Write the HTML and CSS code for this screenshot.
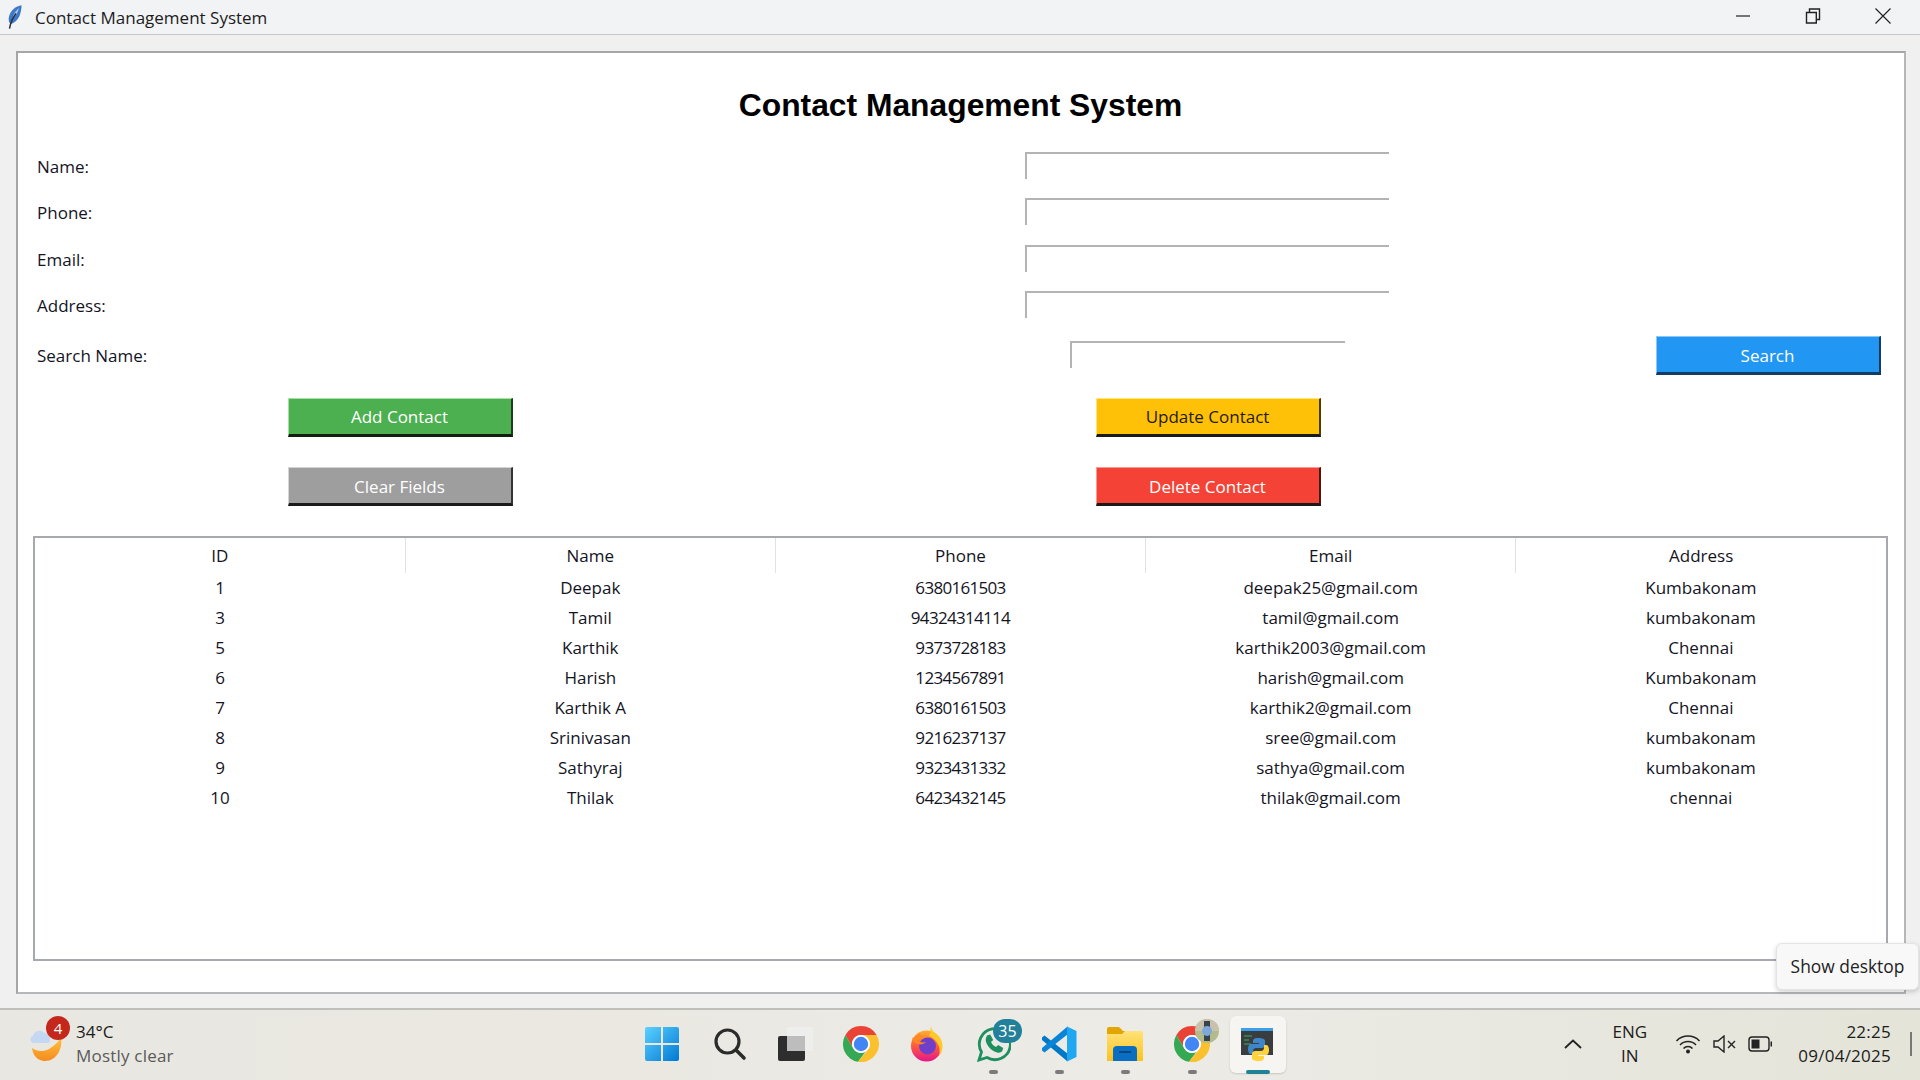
FILE: index.html
```html
<!DOCTYPE html>
<html lang="en">
<head>
<meta charset="utf-8">
<title>Contact Management System</title>
<link rel="stylesheet" href="styles.css">
</head>
<body>
<svg class="defs" width="0" height="0" aria-hidden="true">
  <defs>
    <symbol id="chrome" viewBox="0 0 36 36">
      <path fill="#ea4335" d="M18 0A18 18 0 0 1 33.6 9H18A9 9 0 0 0 10.2 22.5L2.4 9A18 18 0 0 1 18 0Z"/>
      <path fill="#34a853" d="M2.4 9L10.2 22.5A9 9 0 0 0 22.5 25.8L15 35.8A18 18 0 0 1 2.4 9Z"/>
      <path fill="#fbc02d" d="M33.6 9A18 18 0 0 1 15 35.8L25.8 22.5A9 9 0 0 0 18 9Z"/>
      <circle cx="18" cy="18" r="9" fill="#fff"/>
      <circle cx="18" cy="18" r="7.2" fill="#4285f4"/>
    </symbol>
    <linearGradient id="ffbody" x1="0" y1="0" x2="0" y2="1">
      <stop offset="0" stop-color="#ffb02e"/><stop offset=".5" stop-color="#ff5a3c"/><stop offset="1" stop-color="#e3168c"/>
    </linearGradient>
    <linearGradient id="winlogo" x1="0" y1="0" x2="1" y2="1">
      <stop offset="0" stop-color="#5cd1ff"/><stop offset="1" stop-color="#0078d4"/>
    </linearGradient>
    <linearGradient id="moon" x1="0" y1="0" x2="0" y2="1">
      <stop offset="0" stop-color="#ffc53d"/><stop offset="1" stop-color="#f58a1f"/>
    </linearGradient>
    <linearGradient id="folder" x1="0" y1="0" x2="0" y2="1">
      <stop offset="0" stop-color="#ffe27a"/><stop offset="1" stop-color="#fcc21b"/>
    </linearGradient>
  </defs>
</svg>

<header class="titlebar">
  <svg class="feather" viewBox="0 0 14 24">
    <path fill="#3f78c9" d="M13.5 .3C8 .8 2 5.5 .8 12.5 .4 15.5 1 17.5 2.5 19 7 18 10.500 14 12 9.500 13 6 13.700 3 13.500 .3Z"/>
    <path fill="#a6c9f0" d="M11 3C8 5.500 5 9.500 4 14.500 7 12 9.800 8 11 3Z"/>
    <path stroke="#26303f" stroke-width="1.500" fill="none" d="M8 8.500C5 12.500 2.500 17 1.500 23.700"/>
  </svg>
  <span class="titlebar-text">Contact Management System</span>
  <div class="controls">
    <svg class="ctl" viewBox="0 0 16 16"><path d="M1 8H15" stroke="#222" stroke-width="1.2"/></svg>
    <svg class="ctl" viewBox="0 0 16 16"><path d="M1.500 4.500h9.800v10.500H1.500zM4.500 4.500V1h10v10.500h-3" fill="none" stroke="#222" stroke-width="1.400"/></svg>
    <svg class="ctl" viewBox="0 0 16 16"><path d="M.5 .5L15.500 15.500M15.500 .5L.5 15.500" stroke="#222" stroke-width="1.200"/></svg>
  </div>
</header>

<main class="window">
  <section class="panel">
    <h1 class="heading">Contact Management System</h1>
    <div class="form">
      <label class="label">Name:</label><div class="cell"><div class="entry"></div></div><div></div>
      <label class="label">Phone:</label><div class="cell"><div class="entry"></div></div><div></div>
      <label class="label">Email:</label><div class="cell"><div class="entry"></div></div><div></div>
      <label class="label">Address:</label><div class="cell"><div class="entry"></div></div><div></div>
      <label class="label search-row">Search Name:</label>
      <div class="cell search-row"><div class="entry entry-short"></div></div>
      <div class="cell search-row"><div class="btn btn-blue">Search</div></div>
      <div class="cell btn-row"><div class="btn btn-green">Add Contact</div></div>
      <div class="cell btn-row"><div class="btn btn-amber">Update Contact</div></div>
      <div></div>
      <div class="cell btn-row"><div class="btn btn-gray">Clear Fields</div></div>
      <div class="cell btn-row"><div class="btn btn-red">Delete Contact</div></div>
      <div></div>
    </div>
    <div class="table-box">
      <table class="contacts">
        <thead>
          <tr><th>ID</th><th>Name</th><th>Phone</th><th>Email</th><th>Address</th></tr>
        </thead>
        <tbody>
          <tr><td>1</td><td>Deepak</td><td>6380161503</td><td>deepak25@gmail.com</td><td>Kumbakonam</td></tr>
          <tr><td>3</td><td>Tamil</td><td>94324314114</td><td>tamil@gmail.com</td><td>kumbakonam</td></tr>
          <tr><td>5</td><td>Karthik</td><td>9373728183</td><td>karthik2003@gmail.com</td><td>Chennai</td></tr>
          <tr><td>6</td><td>Harish</td><td>1234567891</td><td>harish@gmail.com</td><td>Kumbakonam</td></tr>
          <tr><td>7</td><td>Karthik A</td><td>6380161503</td><td>karthik2@gmail.com</td><td>Chennai</td></tr>
          <tr><td>8</td><td>Srinivasan</td><td>9216237137</td><td>sree@gmail.com</td><td>kumbakonam</td></tr>
          <tr><td>9</td><td>Sathyraj</td><td>9323431332</td><td>sathya@gmail.com</td><td>kumbakonam</td></tr>
          <tr><td>10</td><td>Thilak</td><td>6423432145</td><td>thilak@gmail.com</td><td>chennai</td></tr>
        </tbody>
      </table>
    </div>
  </section>
</main>

<div class="tooltip">Show desktop</div>

<footer class="taskbar">
  <div class="weather">
    <div class="weather-icon">
      <svg viewBox="0 0 36 34" width="36" height="34">
        <path fill="url(#moon)" d="M33 9C35 20 29 33 17 33 10 33 5 28 4 20 10 24 18 24 24 19 28 16 31 13 33 9Z"/>
        <path fill="#c4d8f4" d="M6 15C2 15 1 9 5 8 6 3 13 1 16 5 20 5 23 8 22 12 22 14 21 15 19 15Z"/>
      </svg>
      <span class="weather-badge">4</span>
    </div>
    <div class="weather-text">
      <div class="temp">34°C</div>
      <div class="cond">Mostly clear</div>
    </div>
  </div>

  <div class="apps">
    <div class="app">
      <svg width="36" height="36" viewBox="0 0 36 36">
        <path fill="url(#winlogo)" d="M1 3a2 2 0 0 1 2-2h14v16H1zM19 1h14a2 2 0 0 1 2 2v14H19zM1 19h16v16H3a2 2 0 0 1-2-2zM19 19h16v14a2 2 0 0 1-2 2H19z"/>
      </svg>
    </div>
    <div class="app">
      <svg class="icon-search" width="34" height="34" viewBox="0 0 34 34">
        <circle cx="14.5" cy="14.5" r="11.5" fill="none" stroke="#2b2b2b" stroke-width="3.2"/>
        <path d="M23 23L31 31" stroke="#2b2b2b" stroke-width="3.6" stroke-linecap="round"/>
      </svg>
    </div>
    <div class="app">
      <svg class="icon-views" width="36" height="36" viewBox="0 0 36 36">
        <rect x="0" y="10" width="27" height="25" rx="2" fill="#2e2e2e"/>
        <rect x="9" y="1" width="26" height="24" rx="2" fill="#eee" fill-opacity=".85"/>
        <rect x="9" y="10" width="18" height="15" fill="#bdbdbd"/>
      </svg>
    </div>
    <div class="app"><svg width="36" height="36"><use href="#chrome"/></svg></div>
    <div class="app">
      <svg width="36" height="36" viewBox="0 0 36 36">
        <circle cx="17.5" cy="20" r="15.5" fill="url(#ffbody)"/>
        <path fill="#ffc928" d="M22 0C22 6 27 6 31 12 35 18 34 26 30 30 33 20 26 12 20 10 22 7 21 3 22 0Z"/>
        <circle cx="18.5" cy="20" r="8.5" fill="#6f3fc9"/>
        <path fill="#ff8a1f" d="M3 12C7 12 9 9 11 7 11 9 13 11 16 12 12 13 9 14 6 13 9 16 13 17 17 16 13 20 6 19 3 12Z"/>
      </svg>
    </div>
    <div class="app">
      <svg width="36" height="36" viewBox="0 0 36 36">
        <path fill="none" stroke="#1e8f5e" stroke-width="2.8" d="M4 34L6.5 26A15.5 15.5 0 1 1 12 31.5Z"/>
        <path fill="#1e8f5e" d="M12 9.5l3.2-1 3 5.5-2.2 2c1 2.3 2.6 3.8 5 5l2.2-2 5 3-1 3c-1 1.4-3 2-5 1.4-6-1.6-10-6-11.4-11.4-.3-2 .5-4 1.2-5.5z"/>
      </svg>
      <span class="wa-badge">35</span>
      <span class="dot"></span>
    </div>
    <div class="app">
      <svg width="36" height="36" viewBox="0 0 36 36">
        <path fill="#0078c8" d="M1 11.5L3.5 9.5 27 28 26.5 35.5 1 14Z"/>
        <path fill="#0a84d6" d="M1 24.5L3.5 26.5 27 8 26.5 .5 1 22Z"/>
        <path fill="#1fa8f1" d="M26 .5L35.5 5V31L26 35.5Z"/>
      </svg>
      <span class="dot"></span>
    </div>
    <div class="app">
      <svg width="36" height="36" viewBox="0 0 36 36">
        <path fill="#e3a500" d="M0 3a2 2 0 0 1 2-2h10l4 4h18v8H0z"/>
        <path fill="url(#folder)" d="M0 8h15l3-3h16a2 2 0 0 1 2 2v28H0z"/>
        <path fill="#0a6fc2" d="M6 35V24a4 4 0 0 1 4-4h16a4 4 0 0 1 4 4v11z"/>
        <path d="M12 26H24" stroke="#053e73" stroke-width="1.6"/>
      </svg>
      <span class="dot"></span>
    </div>
    <div class="app">
      <svg width="36" height="36"><use href="#chrome"/></svg>
      <svg class="avatar" width="24" height="24" viewBox="0 0 24 24">
        <circle cx="12" cy="12" r="12" fill="#b2bc8a"/>
        <path d="M0 12A12 12 0 0 1 24 12Z" fill="#c9c1ae"/>
        <rect x="9" y="2" width="6" height="20" fill="#39424e"/>
        <circle cx="12" cy="12" r="5" fill="#7ea8d8"/>
      </svg>
      <span class="dot"></span>
    </div>
    <div class="app app-active">
      <svg width="34" height="34" viewBox="0 0 34 34">
        <rect x="0" y="1" width="32" height="27" fill="#3a3d40"/>
        <rect x="0" y="1" width="32" height="3" fill="#3aa0e8"/>
        <path d="M3 9h8M3 13h5M3 17h7" stroke="#3fae62" stroke-width="1"/>
        <path fill="#3f86c8" d="M17 11c-4 0-5 1.500-5 3v2h6v1h-8c-2 0-3 2-3 5s1 5 3 5h2v-3c0-2 1.500-3 3-3h6c1.500 0 3-1 3-3v-4c0-2-2-3-7-3z"/>
        <path fill="#fed33c" d="M18 34c4 0 5-1.500 5-3v-2h-6v-1h8c2 0 3-2 3-5s-1-5-3-5h-2v3c0 2-1.500 3-3 3h-6c-1.500 0-3 1-3 3v4c0 2 2 3 7 3z"/>
      </svg>
      <span class="bar"></span>
    </div>
  </div>

  <div class="tray">
    <svg class="t-chev" width="20" height="12" viewBox="0 0 20 12"><path d="M2 10L10 2.500 18 10" fill="none" stroke="#222" stroke-width="1.800"/></svg>
    <div class="t-lang"><div>ENG</div><div>IN</div></div>
    <svg class="t-wifi" width="26" height="20" viewBox="0 0 26 20">
      <path d="M1.500 7A16 16 0 0 1 24.500 7M5 11A11 11 0 0 1 21 11M8.500 14.500A6 6 0 0 1 17.500 14.500" fill="none" stroke="#222" stroke-width="1.500"/>
      <circle cx="13" cy="17.500" r="2" fill="#222"/>
    </svg>
    <svg class="t-vol" width="24" height="18" viewBox="0 0 24 18">
      <path d="M1 6h4l6-5v16l-6-5H1z" fill="none" stroke="#222" stroke-width="1.400"/>
      <path d="M15 6l7 7M22 6l-7 7" stroke="#222" stroke-width="1.400"/>
    </svg>
    <svg class="t-bat" width="25" height="16" viewBox="0 0 25 16">
      <rect x="1" y="1" width="20" height="14" rx="3" fill="none" stroke="#222" stroke-width="1.400"/>
      <rect x="3.500" y="3.500" width="8" height="9" fill="#222"/>
      <path d="M22.500 5.500h1.500v5h-1.500z" fill="#222"/>
    </svg>
    <div class="t-clock"><div>22:25</div><div>09/04/2025</div></div>
    <span class="t-show"></span>
  </div>
</footer>
</body>
</html>
```

FILE: styles.css
```css
* { box-sizing: border-box; }

html, body {
  margin: 0;
  height: 100%;
}

body {
  width: 1920px;
  height: 1080px;
  overflow: hidden;
  display: flex;
  flex-direction: column;
  position: relative;
  font-family: "Open Sans", "Noto Sans", sans-serif;
  background: #f0f0f0;
  color: #1a1a1a;
}

.defs { position: absolute; }

/* title bar */
.titlebar {
  height: 35px;
  flex: none;
  display: flex;
  align-items: center;
  padding-left: 8px;
  background: #f2f3f5;
  border-bottom: 1px solid #c6c6c6;
}
.feather { width: 14px; height: 24px; margin-right: 13px; }
.titlebar-text { font-size: 17px; color: #1c1c1c; }
.controls {
  margin-left: auto;
  display: flex;
  align-items: center;
  padding-right: 29px;
  padding-bottom: 2px;
  gap: 54px;
}
.ctl { width: 16px; height: 16px; }

/* window body */
.window {
  flex: 1;
  min-height: 0;
  padding: 16px 14px 14px 16px;
  background: #f0f0f0;
}
.panel {
  height: 100%;
  background: #fff;
  border: 2px solid #b5b7b9;
  border-top-color: #a4a6a8;
  border-left-color: #a4a6a8;
  padding: 0 16px 31px 15px;
  display: flex;
  flex-direction: column;
}
.heading {
  margin: 0;
  height: 90px;
  padding-top: 21px;
  text-align: center;
  font: bold 31.8px/62px "Liberation Sans", Arial, sans-serif;
  color: #000;
}

/* form */
.form {
  margin-left: -15px;
  margin-right: -15px;
  display: grid;
  grid-template-columns: 764px 852px 268px;
  grid-template-rows: repeat(4, 46.5px) 53.5px 69.5px 69.5px;
  flex: none;
}
.label {
  align-self: center;
  padding-left: 19px;
  font-size: 17px;
  color: #14141f;
}
.cell { display: flex; align-items: center; justify-content: center; }
.entry {
  width: 364px;
  height: 27px;
  margin-right: 2px;
  margin-bottom: 2px;
  border-top: 2px solid #b4b4b4;
  border-left: 2px solid #b4b4b4;
}
.entry-short { width: 275px; }

.btn {
  display: flex;
  align-items: center;
  justify-content: center;
  width: 225px;
  height: 39px;
  padding-top: 1px;
  font-size: 17px;
  color: #fff;
  border-style: solid;
  border-width: 1px 2px 3px 1px;
}
.btn-blue { background: #2196f3; border-color: #8ac8f8 #123e63 #123e63 #8ac8f8; }
.btn-green { background: #4caf50; border-color: #a5e0a7 #1c3d1e #101f10 #a5e0a7; }
.btn-gray { background: #9e9e9e; border-color: #d4d4d4 #333 #1a1a1a #d4d4d4; }
.btn-amber { background: #ffc107; color: #1f1a10; border-color: #ffe77e #4e3a05 #1a1a1a #ffe77e; }
.btn-red { background: #f44336; border-color: #fb9a92 #4f1410 #1a1a1a #fb9a92; }

/* table */
.table-box {
  flex: 1;
  min-height: 0;
  margin-top: 14px;
  border: 2px solid #a6aaae;
}
.contacts {
  width: 100%;
  table-layout: fixed;
  border-collapse: collapse;
  font-size: 17px;
  color: #14141f;
  text-align: center;
}
.contacts th {
  height: 35px;
  font-weight: 400;
  padding: 0;
  border-right: 1px solid #e2e2e2;
}
.contacts th:last-child { border-right: 0; }
.contacts td { height: 30px; padding: 0; }
.contacts td:nth-child(3) { letter-spacing: -0.7px; }

/* tooltip */
.tooltip {
  position: absolute;
  left: 1776px;
  top: 943px;
  width: 143px;
  height: 47px;
  padding-bottom: 2px;
  display: flex;
  align-items: center;
  justify-content: center;
  background: #f8f8f8;
  border: 1px solid #e4e4e4;
  border-radius: 6px;
  box-shadow: 0 2px 5px rgba(0,0,0,.18);
  font-size: 17.4px;
  color: #222;
}

/* taskbar */
.taskbar {
  height: 72px;
  flex: none;
  display: grid;
  grid-template-columns: 1fr auto 1fr;
  align-items: center;
  padding-bottom: 3px;
  background: linear-gradient(90deg, #e9e7e1 0%, #ebe8e2 30%, #ecebe6 60%, #e4e4d9 100%);
  border-top: 2px solid #c0bfba;
}

.weather { display: flex; align-items: center; padding-left: 28px; }
.weather-icon { position: relative; width: 36px; height: 34px; margin-top: 2px; margin-right: 12px; }
.weather-badge {
  position: absolute;
  left: 18px;
  top: -12px;
  width: 24px;
  height: 24px;
  border-radius: 50%;
  background: #c4281c;
  color: #fff;
  font-size: 15px;
  line-height: 24px;
  text-align: center;
}
.weather-text { font-size: 17px; line-height: 24px; }
.temp { color: #1c1c1c; }
.cond { color: #5a5a5a; letter-spacing: 0.2px; }

.apps { display: flex; }
.app {
  position: relative;
  width: 66.2px;
  height: 67px;
  display: flex;
  align-items: center;
  justify-content: center;
}
.app-active::before {
  content: "";
  position: absolute;
  left: 5px;
  top: 6px;
  width: 56px;
  height: 57px;
  background: #f6f5f2;
  border-radius: 6px;
  box-shadow: 0 1px 2px rgba(0,0,0,.15);
}
.app svg { position: relative; }
.app .icon-views { margin-left: 2px; }
.app .icon-search { margin-left: 3px; }
.dot {
  position: absolute;
  bottom: 3px;
  left: 29px;
  width: 9px;
  height: 4px;
  border-radius: 2px;
  background: #7b7b7b;
}
.bar {
  position: absolute;
  bottom: 3px;
  left: 21px;
  width: 24px;
  height: 4px;
  border-radius: 2px;
  background: #1f8296;
}
.wa-badge {
  position: absolute;
  left: 33px;
  top: 9px;
  width: 29px;
  height: 24px;
  border-radius: 12px;
  background: #22809a;
  color: #fff;
  font-size: 16px;
  line-height: 24px;
  text-align: center;
}
.app .avatar { position: absolute; left: 36px; top: 9px; }

.tray {
  display: flex;
  align-items: center;
  justify-content: flex-end;
  color: #1c1c1c;
  font-size: 17px;
}
.t-chev { margin-right: 24.5px; }
.t-lang { text-align: center; line-height: 24px; width: 44px; margin-right: 23px; }
.t-wifi { margin-right: 12px; }
.t-vol { margin-right: 11.5px; }
.t-bat { margin-right: 25px; }
.t-clock { text-align: right; line-height: 24px; letter-spacing: 0.25px; }
.t-show {
  width: 2px;
  height: 24px;
  margin-left: 19px;
  margin-right: 8px;
  background: #777;
}
```
